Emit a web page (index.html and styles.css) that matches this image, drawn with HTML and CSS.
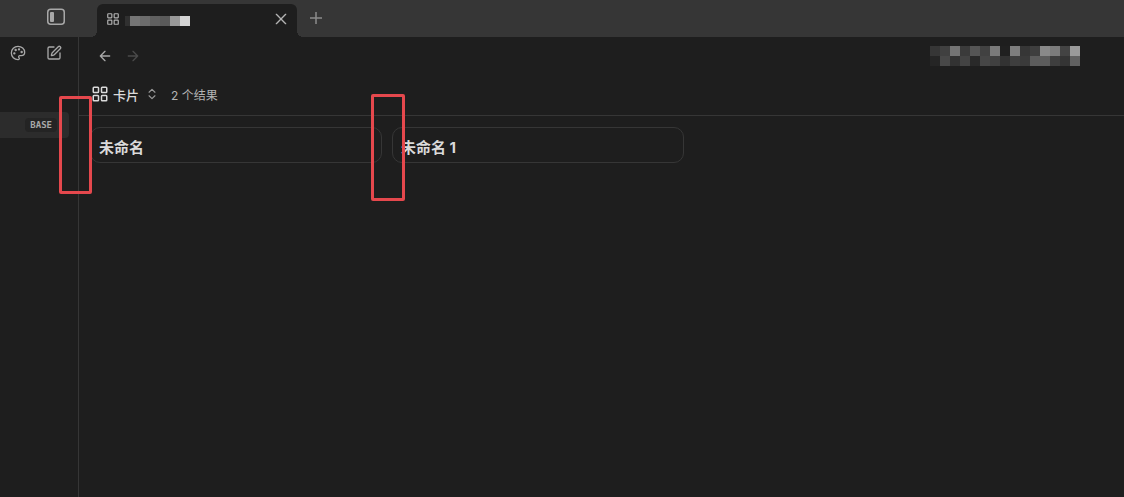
FILE: index.html
```html
<!DOCTYPE html>
<html lang="zh-CN">
<head>
    <meta charset="UTF-8">
    <meta name="viewport" content="width=device-width, initial-scale=1.0">
    <title>卡片</title>
    <link rel="stylesheet" href="styles.css">
</head>
<body>
    <div class="app">
        <header class="titlebar">
            <div class="titlebar-left">
                <button class="icon-btn" aria-label="Toggle sidebar">
                    <svg width="20" height="18" viewBox="0 0 20 18" fill="none" stroke="currentColor" stroke-width="1.5">
                        <rect x="1.75" y="1.25" width="16.5" height="15" rx="3"/>
                        <rect x="4" y="4" width="4" height="10" rx="1" fill="currentColor" stroke="none"/>
                    </svg>
                </button>
            </div>
            <div class="tab">
                <svg width="14" height="14" viewBox="0 0 24 24" fill="none" stroke="currentColor" stroke-width="2">
                    <rect x="3" y="3" width="7" height="7" rx="1"/>
                    <rect x="14" y="3" width="7" height="7" rx="1"/>
                    <rect x="14" y="14" width="7" height="7" rx="1"/>
                    <rect x="3" y="14" width="7" height="7" rx="1"/>
                </svg>
                <svg class="tab-title" width="65" height="10" shape-rendering="crispEdges">
                    <rect x="0" width="5" height="10" fill="#303030"/>
                    <rect x="5" width="10" height="10" fill="#757575"/>
                    <rect x="15" width="10" height="10" fill="#6c6c6c"/>
                    <rect x="25" width="10" height="10" fill="#606060"/>
                    <rect x="35" width="10" height="10" fill="#5a5a5a"/>
                    <rect x="45" width="10" height="10" fill="#999999"/>
                    <rect x="55" width="10" height="10" fill="#d4d4d4"/>
                </svg>
                <button class="icon-btn tab-close" aria-label="Close">
                    <svg width="16" height="16" viewBox="0 0 24 24" fill="none" stroke="currentColor" stroke-width="2" stroke-linecap="round">
                        <path d="M5 5l14 14M19 5L5 19"/>
                    </svg>
                </button>
            </div>
            <button class="icon-btn new-tab" aria-label="New tab">
                <svg width="18" height="18" viewBox="0 0 18 18" fill="none" stroke="currentColor" stroke-width="1.5">
                    <path d="M3 9h12M9 3v12"/>
                </svg>
            </button>
        </header>

        <div class="workspace">
            <aside class="sidebar">
                <div class="sidebar-actions">
                    <button class="icon-btn" aria-label="Palette">
                        <svg width="16" height="16" viewBox="0 0 24 24" fill="none" stroke="currentColor" stroke-width="2" stroke-linecap="round" stroke-linejoin="round">
                            <path d="M12 22a1 1 0 0 1 0-20 10 9 0 0 1 10 9 5 5 0 0 1-5 5h-2.250a1.750 1.750 0 0 0-1.400 2.800l.3.4a1.750 1.750 0 0 1-1.400 2.800z"/>
                            <circle cx="13.500" cy="6.500" r=".8" fill="currentColor"/>
                            <circle cx="17.500" cy="10.500" r=".8" fill="currentColor"/>
                            <circle cx="6.500" cy="12.500" r=".8" fill="currentColor"/>
                            <circle cx="8.500" cy="7.500" r=".8" fill="currentColor"/>
                        </svg>
                    </button>
                    <button class="icon-btn" aria-label="New note">
                        <svg width="16" height="16" viewBox="0 0 24 24" fill="none" stroke="currentColor" stroke-width="2" stroke-linecap="round" stroke-linejoin="round">
                            <path d="M12 3H5a2 2 0 0 0-2 2v14a2 2 0 0 0 2 2h14a2 2 0 0 0 2-2v-7"/>
                            <path d="M18.375 2.625a1 1 0 0 1 3 3l-9.013 9.014a2 2 0 0 1-.853.505l-2.873.84a.5.5 0 0 1-.62-.62l.84-2.873a2 2 0 0 1 .506-.852z"/>
                        </svg>
                    </button>
                </div>
                <div class="file-row">
                    <span class="file-tag">BASE</span>
                </div>
            </aside>

            <main class="view">
                <div class="view-header">
                    <button class="icon-btn" aria-label="Back">
                        <svg width="16" height="16" viewBox="0 0 24 24" fill="none" stroke="currentColor" stroke-width="2" stroke-linecap="round" stroke-linejoin="round">
                            <path d="M12 19l-7-7 7-7M19 12H5"/>
                        </svg>
                    </button>
                    <button class="icon-btn" aria-label="Forward" disabled>
                        <svg width="16" height="16" viewBox="0 0 24 24" fill="none" stroke="currentColor" stroke-width="2" stroke-linecap="round" stroke-linejoin="round">
                            <path d="M12 5l7 7-7 7M5 12h14"/>
                        </svg>
                    </button>
                    <svg class="view-title" width="150" height="20" shape-rendering="crispEdges">
                        <rect x="0" width="10" height="10" fill="#363636"/>
                        <rect x="10" width="10" height="10" fill="#404040"/>
                        <rect x="20" width="10" height="10" fill="#747474"/>
                        <rect x="30" width="10" height="10" fill="#3a3a3a"/>
                        <rect x="40" width="10" height="10" fill="#555555"/>
                        <rect x="50" width="10" height="10" fill="#414141"/>
                        <rect x="60" width="10" height="10" fill="#7a7a7a"/>
                        <rect x="70" width="10" height="10" fill="#202020"/>
                        <rect x="80" width="10" height="10" fill="#7e7e7e"/>
                        <rect x="90" width="10" height="10" fill="#363636"/>
                        <rect x="100" width="10" height="10" fill="#3e3e3e"/>
                        <rect x="110" width="10" height="10" fill="#898989"/>
                        <rect x="120" width="10" height="10" fill="#7c7c7c"/>
                        <rect x="130" width="10" height="10" fill="#434343"/>
                        <rect x="140" width="10" height="10" fill="#9a9a9a"/>
                        <rect x="0" y="10" width="10" height="10" fill="#252525"/>
                        <rect x="10" y="10" width="10" height="10" fill="#484848"/>
                        <rect x="20" y="10" width="10" height="10" fill="#323232"/>
                        <rect x="30" y="10" width="10" height="10" fill="#434343"/>
                        <rect x="40" y="10" width="10" height="10" fill="#292929"/>
                        <rect x="50" y="10" width="10" height="10" fill="#464646"/>
                        <rect x="60" y="10" width="10" height="10" fill="#404040"/>
                        <rect x="70" y="10" width="10" height="10" fill="#323232"/>
                        <rect x="80" y="10" width="10" height="10" fill="#3e3e3e"/>
                        <rect x="90" y="10" width="10" height="10" fill="#3a3a3a"/>
                        <rect x="100" y="10" width="20" height="10" fill="#5c5c5c"/>
                        <rect x="120" y="10" width="10" height="10" fill="#3e3e3e"/>
                        <rect x="130" y="10" width="10" height="10" fill="#343434"/>
                        <rect x="140" y="10" width="10" height="10" fill="#616161"/>
                    </svg>
                </div>

                <div class="toolbar">
                    <button class="view-switch">
                        <svg width="18" height="18" viewBox="0 0 24 24" fill="none" stroke="currentColor" stroke-width="2">
                            <rect x="3" y="3" width="7" height="7" rx="1"/>
                            <rect x="14" y="3" width="7" height="7" rx="1"/>
                            <rect x="14" y="14" width="7" height="7" rx="1"/>
                            <rect x="3" y="14" width="7" height="7" rx="1"/>
                        </svg>
                        <span>卡片</span>
                        <svg class="chevrons" width="14" height="14" viewBox="0 0 24 24" fill="none" stroke="currentColor" stroke-width="2" stroke-linecap="round" stroke-linejoin="round">
                            <path d="M7 9l5-5 5 5M7 15l5 5 5-5"/>
                        </svg>
                    </button>
                    <span class="results">2 个结果</span>
                </div>

                <div class="cards">
                    <div class="card">未命名</div>
                    <div class="card">未命名 1</div>
                </div>
            </main>
        </div>

        <div class="marker marker-left"></div>
        <div class="marker marker-gap"></div>
    </div>
</body>
</html>
```
FILE: styles.css
```css
* {
    margin: 0;
    padding: 0;
    box-sizing: border-box;
}

body {
    background-color: #1e1e1e;
    color: #dadada;
    font-family: Inter, "Noto Sans CJK SC", sans-serif;
    font-size: 12px;
}

button {
    border: none;
    background: none;
    color: inherit;
    font: inherit;
    cursor: pointer;
}

svg {
    display: block;
    flex-shrink: 0;
}

.app {
    position: relative;
    display: flex;
    flex-direction: column;
    min-height: 100vh;
}

.icon-btn {
    display: flex;
    align-items: center;
    justify-content: center;
    color: #a8a8a8;
}

.icon-btn:disabled {
    color: #4a4a4a;
}

/* Title bar */
.titlebar {
    display: flex;
    height: 37px;
    background-color: #363636;
}

.titlebar-left {
    display: flex;
    justify-content: flex-end;
    align-items: center;
    width: 97px;
    padding: 0 31px 4px 0;
}

.tab {
    position: relative;
    display: flex;
    align-items: center;
    width: 200px;
    margin-top: 4px;
    padding: 0 8px 4px 9px;
    border-radius: 6px 6px 0 0;
    background-color: #1e1e1e;
    color: #b3b3b3;
}

/* Curved feet of the active tab */
.tab::before,
.tab::after {
    content: "";
    position: absolute;
    bottom: 0;
    width: 6px;
    height: 6px;
}

.tab::before {
    right: 100%;
    background: radial-gradient(circle at 0 0, transparent 6px, #1e1e1e 6px);
}

.tab::after {
    left: 100%;
    background: radial-gradient(circle at 100% 0, transparent 6px, #1e1e1e 6px);
}

.tab-title {
    margin: 4px 0 0 5px;
}

.tab-close {
    margin-left: auto;
    color: #b3b3b3;
}

.new-tab {
    margin-left: 10px;
    padding-bottom: 1px;
    color: #8c8c8c;
}

/* Sidebar */
.workspace {
    display: flex;
    flex: 1;
}

.sidebar {
    width: 79px;
    border-right: 1px solid #363636;
}

.sidebar-actions {
    display: flex;
    justify-content: space-between;
    height: 32px;
    padding: 0 16px 0 10px;
}

.file-row {
    display: flex;
    align-items: center;
    justify-content: flex-end;
    height: 26px;
    margin: 43px 9px 0 0;
    padding-right: 12px;
    border-radius: 0 4px 4px 0;
    background-color: #2c2c2c;
}

.file-tag {
    padding: 0 5px;
    border-radius: 4px;
    background-color: #242424;
    color: #a8a8a8;
    font-family: "DejaVu Sans Mono", monospace;
    font-size: 9px;
    font-weight: 700;
    line-height: 14px;
}

/* View */
.view {
    flex: 1;
    min-width: 0;
}

.view-header {
    display: flex;
    align-items: center;
    gap: 12px;
    height: 38px;
    padding: 0 44px 0 18px;
}

.view-title {
    margin-left: auto;
}

.toolbar {
    display: flex;
    align-items: center;
    gap: 12px;
    height: 41px;
    padding: 0 12px 2px;
    border-bottom: 1px solid #363636;
}

.view-switch {
    display: flex;
    align-items: center;
    gap: 4px;
    font-size: 13px;
    font-weight: 500;
}

.chevrons {
    margin-left: 2px;
    color: #999999;
}

.results {
    color: #b3b3b3;
}

.cards {
    display: grid;
    grid-template-columns: repeat(auto-fill, 292px);
    gap: 10px;
    padding: 11px;
}

.card {
    padding: 11px 8px 5px;
    border: 1px solid #363636;
    border-radius: 10px;
    font-size: 15px;
    font-weight: 700;
    line-height: 18px;
}

/* Markers over the left edge and the card gap */
.marker {
    position: absolute;
    border: 3px solid #e5484d;
    border-radius: 2px;
}

.marker-left {
    left: 59px;
    top: 96px;
    width: 33px;
    height: 98px;
}

.marker-gap {
    left: 371px;
    top: 94px;
    width: 34px;
    height: 107px;
}
```
